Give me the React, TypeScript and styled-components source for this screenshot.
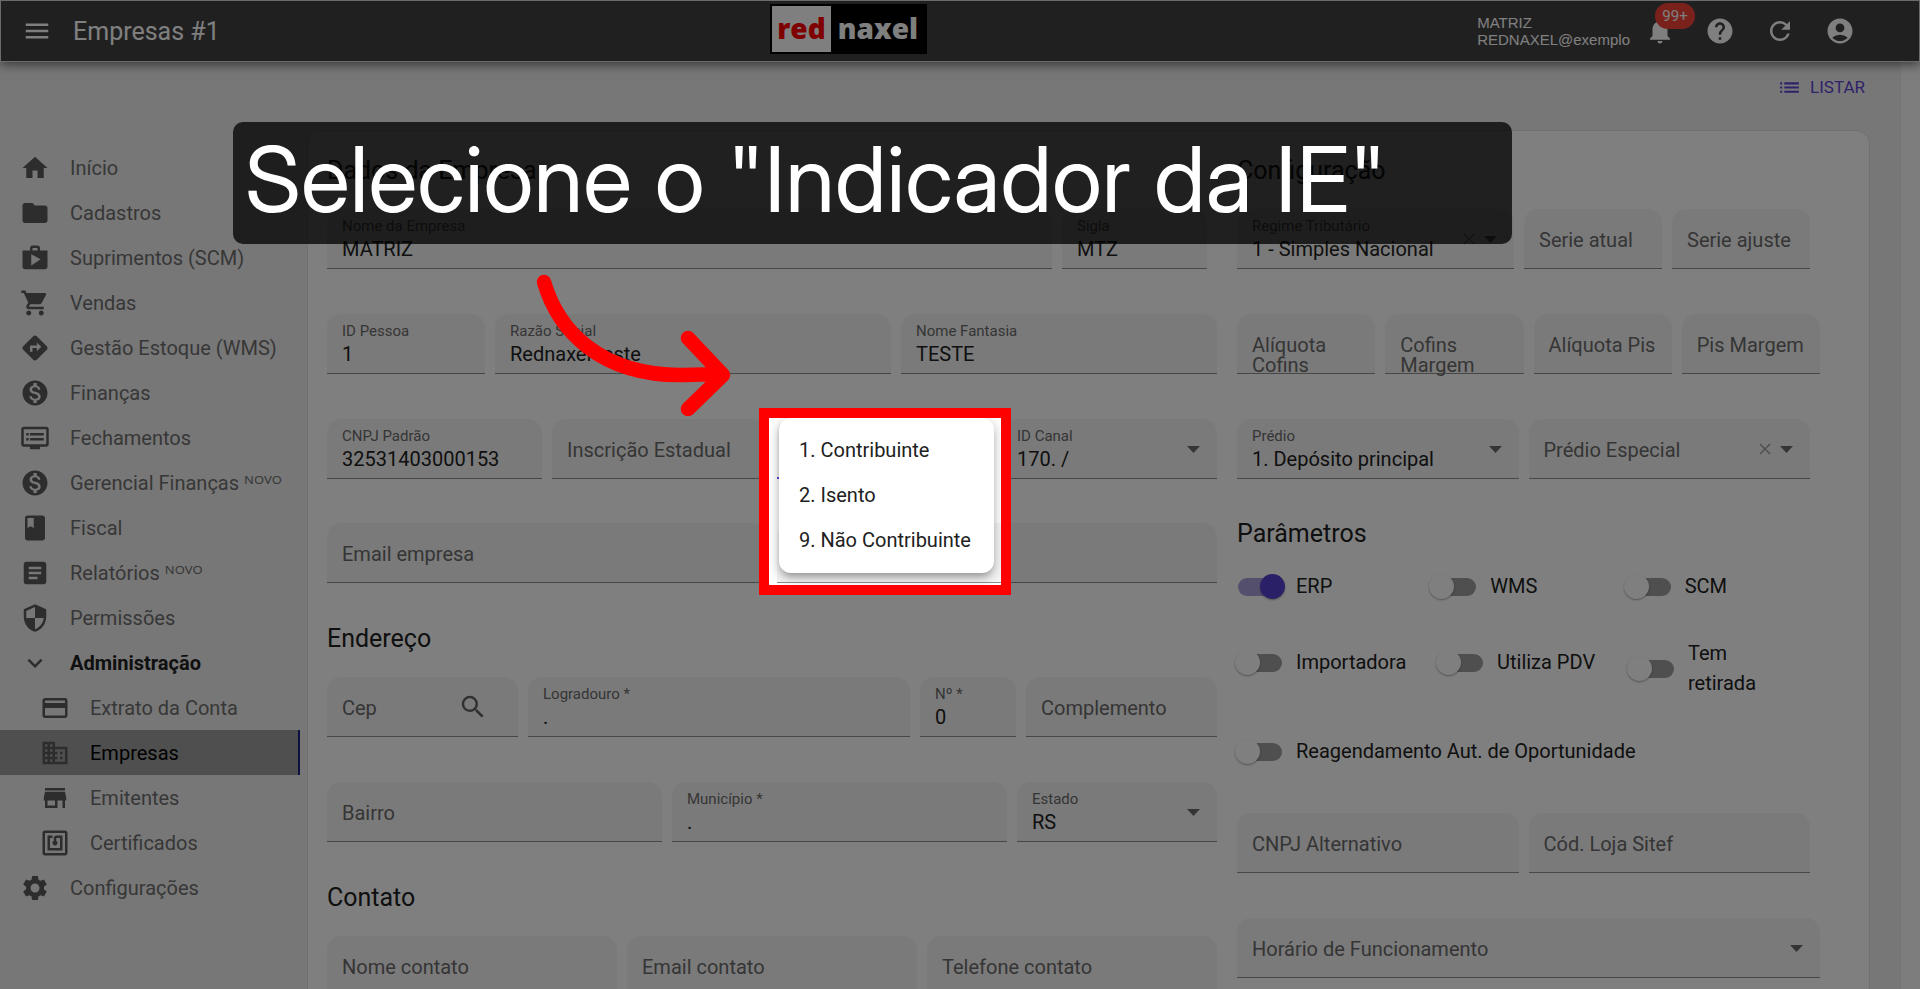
import React, { useId } from "react";
import styled, { createGlobalStyle, css } from "styled-components";
import type { IconType } from "react-icons";
import {
  MdHome, MdFolder, MdShop, MdShoppingCart, MdDirections, MdMonetizationOn, MdDvr, MdClass,
  MdArticle, MdSecurity, MdExpandMore, MdCreditCard, MdBusiness, MdStore, MdNfc, MdSettings,
  MdMenu, MdNotifications, MdHelp, MdRefresh, MdAccountCircle, MdList, MdSearch,
} from "react-icons/md";

const Global = createGlobalStyle`
  *, *::before, *::after { box-sizing: border-box; }
  html, body, #root { height: 100%; }
  body { margin: 0; overflow: hidden; font-family: Roboto, "Noto Sans", sans-serif; font-size: 20px; color: #212121; }
  button, input, select { font: inherit; color: inherit; }
`;

const Page = styled.div`
  position: relative;
  display: flex;
  flex-direction: column;
  height: 100vh;
  overflow: hidden;
  background: #eee;
`;

/* ---------- top bar ---------- */

const TopBar = styled.header`
  position: relative;
  z-index: 2;
  flex: none;
  display: flex;
  align-items: center;
  justify-content: space-between;
  height: 62px;
  padding: 0 49px 0 6px;
  background: #414141;
  border: 1px solid #d6d6d6;
  color: #fff;
  box-shadow: 0 3px 10px rgba(0, 0, 0, 0.5);
`;

const BarStart = styled.div`
  display: flex;
  align-items: center;
  gap: 6px;
`;

const BarTitle = styled.h1`
  margin: 0;
  padding-top: 2px;
  font-size: 25px;
  font-weight: 400;
  line-height: 32px;
`;

const BarEnd = styled.div`
  display: flex;
  align-items: center;
  justify-content: flex-end;
`;

const IconButton = styled.button`
  position: relative;
  display: grid;
  place-items: center;
  width: 60px;
  height: 60px;
  padding: 0;
  border: 0;
  background: none;
  color: inherit;
`;

const Badge = styled.span`
  position: absolute;
  top: 2px;
  left: 25px;
  width: 40px;
  height: 26px;
  border-radius: 13px;
  background: #f44336;
  font-size: 15px;
  line-height: 26px;
  text-align: center;
`;

const Account = styled.p`
  margin: 0;
  font: 15px/17px "Liberation Sans", sans-serif;
`;

const Logo = styled.a`
  display: flex;
  align-items: stretch;
  width: 157px;
  height: 50px;
  margin-bottom: 4px;
  padding: 2px;
  background: #000;
  font: 800 28px/44px "Open Sans", sans-serif;
  text-decoration: none;
`;

const LogoRed = styled.span`
  width: 59px;
  background: #fff;
  color: #f00;
  text-align: center;
`;

const LogoRest = styled.span`
  flex: 1;
  color: #fff;
  text-align: center;
`;

/* ---------- body ---------- */

const Body = styled.div`
  flex: 1;
  display: flex;
  min-height: 0;
`;

const ScrollTrack = styled.div`
  flex: none;
  width: 19px;
  background: #fafafa;
`;

const Sidebar = styled.nav`
  flex: none;
  width: 307px;
  padding-top: 83px;
`;

const NavLink = styled.a<{ $nested?: boolean; $active?: boolean; $open?: boolean }>`
  display: flex;
  align-items: center;
  gap: 20px;
  width: 300px;
  height: 45px;
  padding-left: ${(p) => (p.$nested ? 40 : 20)}px;
  color: #6e6e6e;
  text-decoration: none;
  white-space: nowrap;
  ${(p) => p.$open && css`color: #212121; font-weight: 700;`}
  ${(p) => p.$active && css`
    background: #9e9e9e;
    border-right: 2px solid #1a237e;
    color: #000;
  `}
  svg { flex: none; color: #5a5a5a; }
`;

const Main = styled.main`
  flex: 1;
  display: flex;
  flex-direction: column;
  min-width: 0;
  padding-right: 31px;
`;

const Actions = styled.div`
  flex: none;
  display: flex;
  justify-content: flex-end;
  height: 68px;
  padding: 9px 5px 0 0;
`;

const ListButton = styled.button`
  display: flex;
  align-items: center;
  gap: 8px;
  height: 32px;
  padding: 0;
  border: 0;
  background: none;
  color: #5e44d4;
  font-size: 17px;
`;

const Card = styled.form`
  flex: 1;
  display: flex;
  gap: 20px;
  min-height: 0;
  padding: 24px 49px 0 19px;
  background: #fff;
  border: 1px solid #e0e0e0;
  border-bottom: 0;
  border-radius: 14px 14px 0 0;
`;

const Column = styled.div<{ $grow: number }>`
  flex: ${(p) => p.$grow} 1 0;
  min-width: 0;
`;

const Heading = styled.h2<{ $top?: number }>`
  margin: ${(p) => p.$top ?? 0}px 0 0;
  font-size: 25px;
  font-weight: 400;
  line-height: 32px;
  color: #212121;
`;

const Row = styled.div<{ $cols: string; $top: number; $end?: number }>`
  display: grid;
  grid-template-columns: ${(p) => p.$cols};
  gap: 10px;
  margin-top: ${(p) => p.$top}px;
  margin-right: ${(p) => p.$end ?? 0}px;
`;

/* ---------- fields ---------- */

const FieldBox = styled.div`
  position: relative;
  min-width: 0;
  height: 60px;
  background: #f5f5f5;
  border-bottom: 1px solid #8e8e8e;
  border-radius: 14px 14px 0 0;
`;

const Label = styled.label<{ $floating: boolean }>`
  position: absolute;
  left: 15px;
  right: 10px;
  top: ${(p) => (p.$floating ? 7 : 21)}px;
  font-size: ${(p) => (p.$floating ? 15 : 20)}px;
  line-height: 20px;
  color: #6b6b6b;
  pointer-events: none;
`;

const control = css`
  display: block;
  width: 100%;
  height: 59px;
  padding: 21px 15px 0;
  border: 0;
  outline: 0;
  background: none;
  appearance: none;
  color: #212121;
`;

const Input = styled.input`${control}`;
const Select = styled.select`${control}`;

const Adornments = styled.span`
  position: absolute;
  right: 17px;
  top: 0;
  display: flex;
  align-items: center;
  gap: 9px;
  height: 60px;
  color: #6b6b6b;
  pointer-events: none;
`;

const SearchButton = styled.button`
  position: absolute;
  right: 30px;
  top: 15px;
  width: 30px;
  height: 30px;
  padding: 0;
  border: 0;
  background: none;
  color: #616161;
`;

const Caret = () => (
  <svg width="13" height="7" viewBox="0 0 13 7" aria-hidden="true"><path d="M0 0h13L6.500 7z" fill="currentColor" /></svg>
);
const Cross = () => (
  <svg width="12" height="12" viewBox="0 0 12 12" aria-hidden="true"><path d="M1 1l10 10M11 1L1 11" stroke="#9e9e9e" strokeWidth="1.500" /></svg>
);

type FieldProps = {
  label: string;
  value?: string;
  select?: boolean;
  clearable?: boolean;
  search?: boolean;
};

function Field({ label, value = "", select, clearable, search }: FieldProps) {
  const id = useId();
  return (
    <FieldBox>
      {select ? (
        <Select id={id} defaultValue={value}><option value={value}>{value}</option></Select>
      ) : (
        <Input id={id} defaultValue={value} />
      )}
      <Label htmlFor={id} $floating={value !== ""}>{label}</Label>
      {select && <Adornments>{clearable && <Cross />}<Caret /></Adornments>}
      {search && <SearchButton type="button" aria-label="Buscar Cep"><MdSearch size={30} /></SearchButton>}
    </FieldBox>
  );
}

/* ---------- open menu, spotlight and arrow ---------- */

const OpenField = styled(FieldBox)`
  border-bottom: 2px solid #5e44d4;
`;

const Menu = styled.ul`
  position: absolute;
  z-index: 5;
  top: -1px;
  left: 2px;
  right: -2px;
  margin: 0;
  padding: 10px 0;
  list-style: none;
  background: #fff;
  border-radius: 12px;
  box-shadow: 0 6px 6px -3px rgba(0, 0, 0, 0.2), 0 4px 12px 1px rgba(0, 0, 0, 0.25);
`;

const MenuItem = styled.li`
  padding-left: 20px;
  line-height: 45px;
  white-space: nowrap;
`;

const Spotlight = styled.div`
  position: absolute;
  z-index: 6;
  top: -11px;
  left: -18px;
  right: -19px;
  height: 187px;
  border: 10px solid #f00;
  box-shadow: 0 0 0 3000px rgba(0, 0, 0, 0.5);
  pointer-events: none;
`;

const Arrow = styled.svg`
  position: absolute;
  z-index: 8;
  right: 252px;
  top: -149px;
  pointer-events: none;
`;

const Banner = styled.div`
  position: absolute;
  z-index: 7;
  top: 122px;
  left: 233px;
  right: 408px;
  height: 122px;
  padding-left: 12px;
  border-radius: 10px;
  background: rgba(0, 0, 0, 0.75);
  color: #fff;
  font: 400 91px/114px "Inter Display", Inter, sans-serif;
  font-variation-settings: "opsz" 32;
  white-space: nowrap;
`;

/* ---------- switches ---------- */

const SwitchRow = styled.div<{ $cols: string; $top: number }>`
  display: grid;
  grid-template-columns: ${(p) => p.$cols};
  align-items: start;
  margin: ${(p) => p.$top}px 2px 0 -2px;
`;

const SwitchLabel = styled.label`
  display: flex;
  align-items: center;
  gap: 11px;
  min-height: 48px;
  line-height: 30px;
  color: #212121;
`;

const SwitchInput = styled.input`
  appearance: none;
  position: relative;
  flex: none;
  width: 50px;
  height: 25px;
  margin: 0;
  &::before {
    content: "";
    position: absolute;
    inset: 4px 3px 3px;
    border-radius: 9px;
    background: #9e9e9e;
  }
  &::after {
    content: "";
    position: absolute;
    left: 0;
    top: 0;
    width: 25px;
    height: 25px;
    border-radius: 50%;
    background: #fff;
    box-shadow: 0 1px 2px rgba(0, 0, 0, 0.35);
  }
  &:checked::before { background: #ab9fdc; }
  &:checked::after { left: 25px; background: #5540ce; }
`;

const Switch = ({ label, on }: { label: React.ReactNode; on?: boolean }) => (
  <SwitchLabel>
    <SwitchInput type="checkbox" role="switch" defaultChecked={on} />
    <span>{label}</span>
  </SwitchLabel>
);

type NavItem = { icon: IconType; text: string; nested?: boolean; active?: boolean; open?: boolean };

const nav: NavItem[] = [
  { icon: MdHome, text: "Início" },
  { icon: MdFolder, text: "Cadastros" },
  { icon: MdShop, text: "Suprimentos (SCM)" },
  { icon: MdShoppingCart, text: "Vendas" },
  { icon: MdDirections, text: "Gestão Estoque (WMS)" },
  { icon: MdMonetizationOn, text: "Finanças" },
  { icon: MdDvr, text: "Fechamentos" },
  { icon: MdMonetizationOn, text: "Gerencial Finanças ᴺᴼⱽᴼ" },
  { icon: MdClass, text: "Fiscal" },
  { icon: MdArticle, text: "Relatórios ᴺᴼⱽᴼ" },
  { icon: MdSecurity, text: "Permissões" },
  { icon: MdExpandMore, text: "Administração", open: true },
  { icon: MdCreditCard, text: "Extrato da Conta", nested: true },
  { icon: MdBusiness, text: "Empresas", nested: true, active: true },
  { icon: MdStore, text: "Emitentes", nested: true },
  { icon: MdNfc, text: "Certificados", nested: true },
  { icon: MdSettings, text: "Configurações" },
];

const options = ["1. Contribuinte", "2. Isento", "9. Não Contribuinte"];

export default function App() {
  return (
    <Page>
      <Global />
      <TopBar>
        <BarStart>
          <IconButton aria-label="Menu"><MdMenu size={30} /></IconButton>
          <BarTitle>Empresas #1</BarTitle>
        </BarStart>
        <Logo href="#"><LogoRed>red</LogoRed><LogoRest>naxel</LogoRest></Logo>
        <BarEnd>
          <Account>MATRIZ<br />REDNAXEL@exemplo</Account>
          <IconButton aria-label="Notificações"><MdNotifications size={30} /><Badge>99+</Badge></IconButton>
          <IconButton aria-label="Ajuda"><MdHelp size={30} /></IconButton>
          <IconButton aria-label="Atualizar"><MdRefresh size={30} /></IconButton>
          <IconButton aria-label="Conta"><MdAccountCircle size={30} /></IconButton>
        </BarEnd>
      </TopBar>

      <Body>
        <Sidebar>
          {nav.map(({ icon: Icon, text, nested, active, open }) => (
            <NavLink key={text} href="#" $nested={nested} $active={active} $open={open}>
              <Icon size={30} />{text}
            </NavLink>
          ))}
        </Sidebar>

        <Main>
          <Actions><ListButton type="button"><MdList size={25} />LISTAR</ListButton></Actions>
          <Card>
            <Column $grow={890}>
              <Heading>Dados da Empresa</Heading>
              <Row $cols="725fr 145fr" $top={22} $end={10}>
                <Field label="Nome da Empresa" value="MATRIZ" />
                <Field label="Sigla" value="MTZ" />
              </Row>
              <Row $cols="158fr 396fr 316fr" $top={45}>
                <Field label="ID Pessoa" value="1" />
                <Field label="Razão Social" value="Rednaxel teste" />
                <Field label="Nome Fantasia" value="TESTE" />
              </Row>
              <Row $cols="repeat(4, 1fr)" $top={45}>
                <Field label="CNPJ Padrão" value="32531403000153" />
                <Field label="Inscrição Estadual" />
                <OpenField>
                  <Menu role="listbox" aria-label="Indicador da IE">
                    {options.map((o) => <MenuItem key={o} role="option">{o}</MenuItem>)}
                  </Menu>
                  <Spotlight />
                  <Arrow width="210" height="160" viewBox="530 270 210 160" fill="none" stroke="#f00" strokeWidth="14.500" strokeLinecap="round" strokeLinejoin="round" aria-hidden="true">
                    <path d="M544 282C558 330 600 376 683 375L722 374M688 338L723 375L688 409" />
                  </Arrow>
                </OpenField>
                <Field label="ID Canal" value="170. /" select />
              </Row>
              <Row $cols="1fr 1fr" $top={44}>
                <Field label="Email empresa" />
                <FieldBox />
              </Row>
              <Heading $top={40}>Endereço</Heading>
              <Row $cols="191fr 382fr 96fr 191fr" $top={22}>
                <Field label="Cep" search />
                <Field label="Logradouro *" value="." />
                <Field label="Nº *" value="0" />
                <Field label="Complemento" />
              </Row>
              <Row $cols="335fr 335fr 200fr" $top={45}>
                <Field label="Bairro" />
                <Field label="Município *" value="." />
                <Field label="Estado" value="RS" select />
              </Row>
              <Heading $top={40}>Contato</Heading>
              <Row $cols="repeat(3, 1fr)" $top={22}>
                <Field label="Nome contato" />
                <Field label="Email contato" />
                <Field label="Telefone contato" />
              </Row>
            </Column>

            <Column $grow={583}>
              <Heading>Configuração</Heading>
              <Row $cols="277fr 138fr 138fr" $top={22} $end={10}>
                <Field label="Regime Tributário" value="1 - Simples Nacional" select clearable />
                <Field label="Serie atual" />
                <Field label="Serie ajuste" />
              </Row>
              <Row $cols="repeat(4, 1fr)" $top={45}>
                <Field label="Alíquota Cofins" />
                <Field label="Cofins Margem" />
                <Field label="Alíquota Pis" />
                <Field label="Pis Margem" />
              </Row>
              <Row $cols="1fr 1fr" $top={45} $end={10}>
                <Field label="Prédio" value="1. Depósito principal" select />
                <Field label="Prédio Especial" select clearable />
              </Row>
              <Heading $top={39}>Parâmetros</Heading>
              <SwitchRow $cols="1fr 1fr 1fr" $top={12}>
                <Switch label="ERP" on />
                <Switch label="WMS" />
                <Switch label="SCM" />
              </SwitchRow>
              <SwitchRow $cols="201fr 191fr 191fr" $top={28}>
                <Switch label="Importadora" />
                <Switch label="Utiliza PDV" />
                <Switch label={<>Tem<br />retirada</>} />
              </SwitchRow>
              <SwitchRow $cols="1fr" $top={29}>
                <Switch label="Reagendamento Aut. de Oportunidade" />
              </SwitchRow>
              <Row $cols="1fr 1fr" $top={38} $end={10}>
                <Field label="CNPJ Alternativo" />
                <Field label="Cód. Loja Sitef" />
              </Row>
              <Row $cols="1fr" $top={45}>
                <Field label="Horário de Funcionamento" select />
              </Row>
            </Column>
          </Card>
        </Main>
        <ScrollTrack />
      </Body>

      <Banner>Selecione o "Indicador da IE"</Banner>
    </Page>
  );
}
